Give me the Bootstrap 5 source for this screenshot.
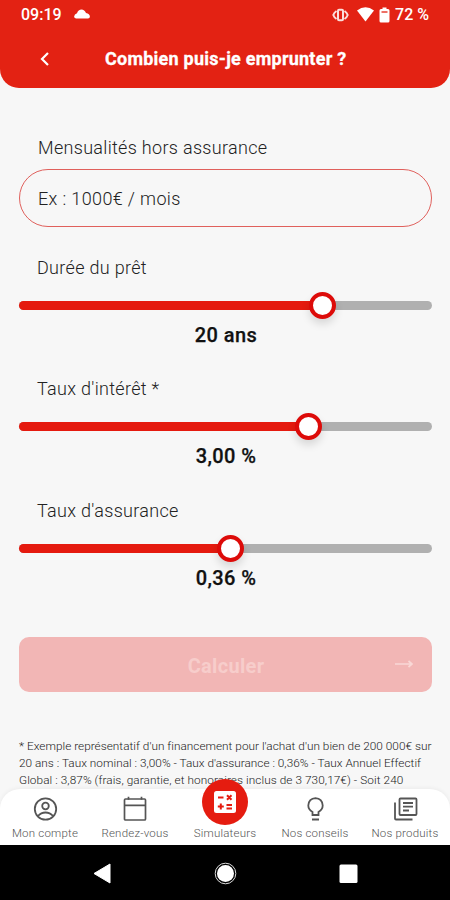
<!DOCTYPE html>
<html lang="fr">
<head>
<meta charset="utf-8">
<meta name="viewport" content="width=device-width, initial-scale=1">
<title>Combien puis-je emprunter ?</title>
<link href="https://cdn.jsdelivr.net/npm/bootstrap@5.3.0/dist/css/bootstrap.min.css" rel="stylesheet">
<style>
body{font-family:Roboto,"Liberation Sans",sans-serif;background:#f7f7f7;color:#111}
.screen{width:450px;height:900px;background:#f7f7f7}
.app-head{height:88px;background:#e32213;border-radius:0 0 19px 19px}
.status{height:29px;padding:0 21px 0 21px;font-size:16px;font-weight:500;line-height:29px}
.cloud{margin:0 0 2px 12px}
.title-bar{height:59px;padding-left:37px}
.title-bar h1{font-size:18px;font-weight:700;line-height:22px;margin:0 0 0 52px;letter-spacing:.24px;-webkit-text-stroke:.3px #fff}
.content{height:757px;padding:48px 18px 0 19px}
.lbl{font-size:18px;font-weight:300;line-height:24px;padding-left:18px;margin:0;color:#222;letter-spacing:.31px;white-space:nowrap}
.lbl.first{padding-left:19px}
.amount{height:58px;margin-top:9px;border:1px solid #e0605c;border-radius:29px;background:transparent;padding:0 18px;font-size:18px;font-weight:300;color:#222;letter-spacing:.36px}
.amount::placeholder{color:#222;opacity:1}
.settings{padding-top:25px}
.setting{height:121.3px;padding-top:4px}
.track{height:9px;border-radius:5px;background:#b0b0b0;margin-top:21px}
.fill{height:9px;border-radius:5px;background:#e51a0f}
.knob{width:27px;height:27px;margin-right:-13.5px;flex:none;border:4.5px solid #dd0b09;border-radius:50%;background:#fff;box-shadow:0 5px 9px rgba(0,0,0,.13)}
.val{font-size:20px;font-weight:500;line-height:24px;margin-top:13px;padding-left:1px;letter-spacing:.4px;-webkit-text-stroke:.25px #111}
.calc{height:55px;margin-top:21px;border:0;border-radius:10px;font-size:20px;font-weight:700;letter-spacing:.3px;padding:0 19px}
.calc,.calc:disabled{background:#f2b6b5;color:#f7cdcb;opacity:1}
.calc span{padding:3px 0 0 19px}
.note{margin:46px 0 0;font-size:11.8px;font-weight:300;line-height:17.2px;color:#222;letter-spacing:.02px;white-space:nowrap}
.note span{display:block}
.note .wide{letter-spacing:.07px}
.tabs{height:56px;background:#fff;border-radius:20px 20px 0 0;margin-top:-56px;box-shadow:0 -1px 4px rgba(0,0,0,.05)}
.tabs a{width:90px;height:56px;color:#555;font-size:11.5px;font-weight:300;line-height:14px;letter-spacing:.2px;white-space:nowrap;padding-top:7px}
.tabs svg{margin-bottom:4px}
.tabs .sim{width:46px;height:46px;margin-top:-17px;margin-bottom:1px;border-radius:50%;background:#e51c10}
.tabs .sim svg{margin:0}
.sysbar{height:55px;background:#000}
</style>
<script src="https://cdn.jsdelivr.net/npm/bootstrap@5.3.0/dist/js/bootstrap.bundle.min.js"></script>
</head>
<body>
<div class="screen overflow-hidden d-flex flex-column">
  <header class="app-head text-white flex-shrink-0">
    <div class="status d-flex align-items-center">
      <span>09:19</span>
      <svg class="cloud" width="16" height="10" viewBox="0 0 16 10" fill="#fff"><path d="M2 9.500Q0 9.200 .1 7.500Q.4 5 3 4.200Q4.300 .5 7.500 .5Q10.500 .5 12 4Q15.700 4.800 15.900 7.500Q15.900 9.500 14 9.500Z"/></svg>
      <svg class="ms-auto" width="17" height="14" viewBox="0 0 17 14" fill="none" stroke="#fff" stroke-opacity=".85" stroke-width="2"><rect x="6" y="1.800" width="5" height="10.400" rx="1"/><path d="M4.500 3Q2.200 4.500 1.300 7Q2.200 9.500 4.500 11M12.500 3Q14.800 4.500 15.700 7Q14.800 9.500 12.500 11"/></svg>
      <svg class="ms-2" width="17" height="15" viewBox="0 0 17 15" fill="#fff"><path d="M0 3.500Q8.500-3 17 3.500L8.500 14.500Z"/></svg>
      <svg class="ms-1 me-1" width="13" height="16" viewBox="0 0 13 16"><path fill="#fff" d="M4.500 .5h4v1.500h1.500q1.500 0 1.500 1.500v10.500q0 1.500-1.500 1.500h-7q-1.500 0-1.500-1.500v-10.500q0-1.500 1.500-1.500h1.500z"/><path stroke="#e32213" stroke-width="1.300" d="M3.500 5h6"/></svg>
      <span>72 %</span>
    </div>
    <div class="title-bar d-flex align-items-center">
      <svg width="16" height="16" viewBox="0 0 16 16" fill="none" stroke="#fff" stroke-width="2.200"><path d="M11 2 5 8l6 6"/></svg>
      <h1>Combien puis-je emprunter ?</h1>
    </div>
  </header>

  <main class="content flex-shrink-0 overflow-hidden">
    <label class="lbl first d-block" for="amount">Mensualités hors assurance</label>
    <input id="amount" class="amount d-block w-100" placeholder="Ex : 1000€ / mois">

    <div class="settings">
      <section class="setting">
        <p class="lbl">Durée du prêt</p>
        <div class="track"><div class="fill d-flex align-items-center justify-content-end" style="width:73.4%"><span class="knob"></span></div></div>
        <div class="val text-center">20 ans</div>
      </section>
      <section class="setting">
        <p class="lbl">Taux d'intérêt *</p>
        <div class="track"><div class="fill d-flex align-items-center justify-content-end" style="width:70%"><span class="knob"></span></div></div>
        <div class="val text-center">3,00 %</div>
      </section>
      <section class="setting">
        <p class="lbl">Taux d'assurance</p>
        <div class="track"><div class="fill d-flex align-items-center justify-content-end" style="width:51.3%"><span class="knob"></span></div></div>
        <div class="val text-center">0,36 %</div>
      </section>
    </div>

    <button class="calc btn w-100 d-flex align-items-center" disabled>
      <span class="flex-fill">Calculer</span>
      <svg width="18" height="10" viewBox="0 0 18 10" fill="none" stroke="#f9d8d6" stroke-width="1.700"><path d="M0 5h17M13.500 2l3.500 3-3.500 3"/></svg>
    </button>

    <p class="note"><span>* Exemple représentatif d'un financement pour l'achat d'un bien de 200 000€ sur</span><span>20 ans : Taux nominal : 3,00% - Taux d'assurance : 0,36% - Taux Annuel Effectif</span><span class="wide">Global : 3,87% (frais, garantie, et honoraires inclus de 3 730,17€) - Soit 240</span></p>
  </main>

  <nav class="tabs d-flex flex-shrink-0 position-relative">
    <a class="d-flex flex-column align-items-center text-decoration-none">
      <svg width="26" height="26" viewBox="0 0 26 26" fill="none" stroke="#555" stroke-width="1.800"><circle cx="13.500" cy="13" r="10.700"/><circle cx="13.500" cy="10" r="3.300"/><path d="M6 20Q9 16.500 13.500 16.500T21 20"/></svg>
      Mon compte</a>
    <a class="d-flex flex-column align-items-center text-decoration-none">
      <svg width="26" height="26" viewBox="0 0 26 26" fill="none" stroke="#555" stroke-width="1.700"><rect x="2.500" y="3" width="21" height="21" rx="1"/><path d="M2.500 9.300h21M6.500 .8v3M19.500 .8v3"/></svg>
      Rendez-vous</a>
    <a class="d-flex flex-column align-items-center text-decoration-none">
      <span class="sim d-flex align-items-center justify-content-center flex-shrink-0"><svg width="24" height="24" viewBox="0 0 24 24"><rect x="1" y="1" width="22" height="22" rx="2.500" fill="#fff"/><path stroke="#e51c10" stroke-width="2" d="M5 7.500h5.500M4.800 16.500h6M7.800 13.500v6M13.500 15h5.500M13.500 18.500h5.500M14 5.200l4.500 4.500M18.500 5.200l-4.500 4.500"/></svg></span>
      Simulateurs</a>
    <a class="d-flex flex-column align-items-center text-decoration-none">
      <svg width="26" height="26" viewBox="0 0 26 26" fill="none" stroke="#555" stroke-width="1.800"><path d="M10.500 19v-3Q6.300 13.500 6.300 9.500Q6.800 2.500 13.500 2.200Q20.200 2.500 20.700 9.500Q20.700 13.500 16.500 16V19ZM10 23.500h7"/></svg>
      Nos conseils</a>
    <a class="d-flex flex-column align-items-center text-decoration-none">
      <svg width="26" height="26" viewBox="0 0 26 26" fill="none" stroke="#555" stroke-width="1.800"><rect x="7.500" y="2.500" width="17" height="16.500" rx="1"/><path d="M3 6.500V22.500q0 1 1 1H20.500M11 7h10M11 10.700h10M11 14.500h6"/></svg>
      Nos produits</a>
  </nav>

  <div class="sysbar flex-shrink-0 d-flex align-items-center">
    <svg width="450" height="55" viewBox="0 0 450 55" fill="#fff"><path d="M94 28.500 110 19v19Z" stroke="#fff" stroke-linejoin="round"/><circle cx="225.500" cy="28.500" r="8.500"/><circle cx="225.500" cy="28.500" r="10.300" fill="none" stroke="#ddd" stroke-width="1"/><rect x="339.500" y="19.500" width="18" height="18.500" rx="1.500"/></svg>
  </div>
</div>
</body>
</html>
